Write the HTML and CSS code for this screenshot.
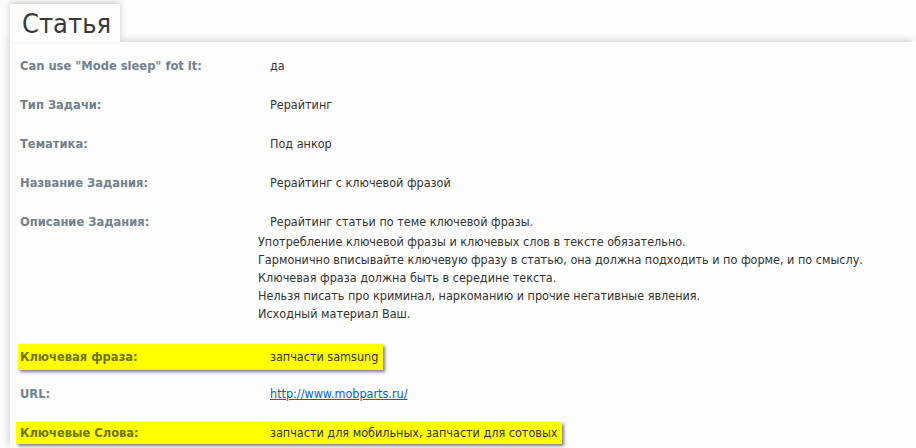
FILE: index.html
```html
<!DOCTYPE html>
<html lang="ru">
<head>
  <meta charset="UTF-8" />
  <title>Статья</title>
  <link rel="stylesheet" href="styles.css">
</head>
<body>

  <div class="tabs">
    <div class="tab">Статья</div>
  </div>

  <div class="panel">
    <div class="row">
      <div class="label">Can use "Mode sleep" fot it:</div>
      <div class="value">да</div>
    </div>
    <div class="row">
      <div class="label">Тип Задачи:</div>
      <div class="value">Рерайтинг</div>
    </div>
    <div class="row">
      <div class="label">Тематика:</div>
      <div class="value">Под анкор</div>
    </div>
    <div class="row">
      <div class="label">Название Задания:</div>
      <div class="value">Рерайтинг с ключевой фразой</div>
    </div>
    <div class="row row-desc">
      <div class="label">Описание Задания:</div>
      <div class="value desc">
        <p class="first">Рерайтинг статьи по теме ключевой фразы.</p>
        <p>Употребление ключевой фразы и ключевых слов в тексте обязательно.</p>
        <p>Гармонично вписывайте ключевую фразу в статью, она должна подходить и по форме, и по смыслу.</p>
        <p>Ключевая фраза должна быть в середине текста.</p>
        <p>Нельзя писать про криминал, наркоманию и прочие негативные явления.</p>
        <p>Исходный материал Ваш.</p>
      </div>
    </div>
    <div class="row row-mark">
      <div class="mark">
        <div class="label">Ключевая фраза:</div>
        <div class="value">запчасти samsung</div>
      </div>
    </div>
    <div class="row">
      <div class="label">URL:</div>
      <div class="value"><a href="#">http://www.mobparts.ru/</a></div>
    </div>
    <div class="row">
      <div class="mark tight">
        <div class="label">Ключевые Слова:</div>
        <div class="value">запчасти для мобильных, запчасти для сотовых</div>
      </div>
    </div>
  </div>

</body>
</html>
```

FILE: styles.css
```css
body {
  margin: 0;
  background-color: #fdfdfd;
  font-family: "DejaVu Sans Condensed", "DejaVu Sans", sans-serif;
  font-size: 12.5px;
  color: #333;
  overflow: hidden;
}
.tabs {
  padding: 4px 0 0 10px;
  display: flex;
}
.tab {
  position: relative;
  z-index: 2;
  width: 86px;
  height: 38px;
  padding: 0 12px;
  line-height: 40px;
  font-size: 27px;
  color: #3a3a3a;
  background-color: #fdfdfd;
  box-shadow: -2px -2px 5px rgba(0,0,0,0.10), 2px -2px 5px rgba(0,0,0,0.10);
}
.panel {
  position: relative;
  z-index: 1;
  box-sizing: border-box;
  height: 406px;
  margin-left: 10px;
  padding: 15px 0 0 10px;
  background-color: #fdfdfd;
  box-shadow: -3px -3px 6px rgba(0,0,0,0.13);
}
.row {
  display: flex;
  align-items: flex-start;
  min-height: 39px;
}
.label {
  width: 238px;
  flex-shrink: 0;
  font-weight: bold;
  font-size: 12.8px;
  line-height: 18px;
  color: #71818d;
}
.value {
  line-height: 18px;
  text-indent: 12px;
}
.desc p {
  margin: 0;
  text-indent: 0;
}
.desc .first {
  text-indent: 12px;
  margin-bottom: 2px;
}
.row-desc {
  margin-bottom: 25px;
}
.row-mark {
  min-height: 37px;
}
.mark {
  display: flex;
  margin: -4px 0 0 -2px;
  padding: 4px 5px 4px 2px;
  background-color: #ffff00;
  box-shadow: 2px 2px 3px rgba(0,0,0,0.5);
}
.mark .label {
  color: #6e7300;
}
.mark.tight {
  margin: -2px 0 0 -4px;
  padding: 2px 5px 2px 4px;
}
a {
  color: #0b62c4;
}
```
